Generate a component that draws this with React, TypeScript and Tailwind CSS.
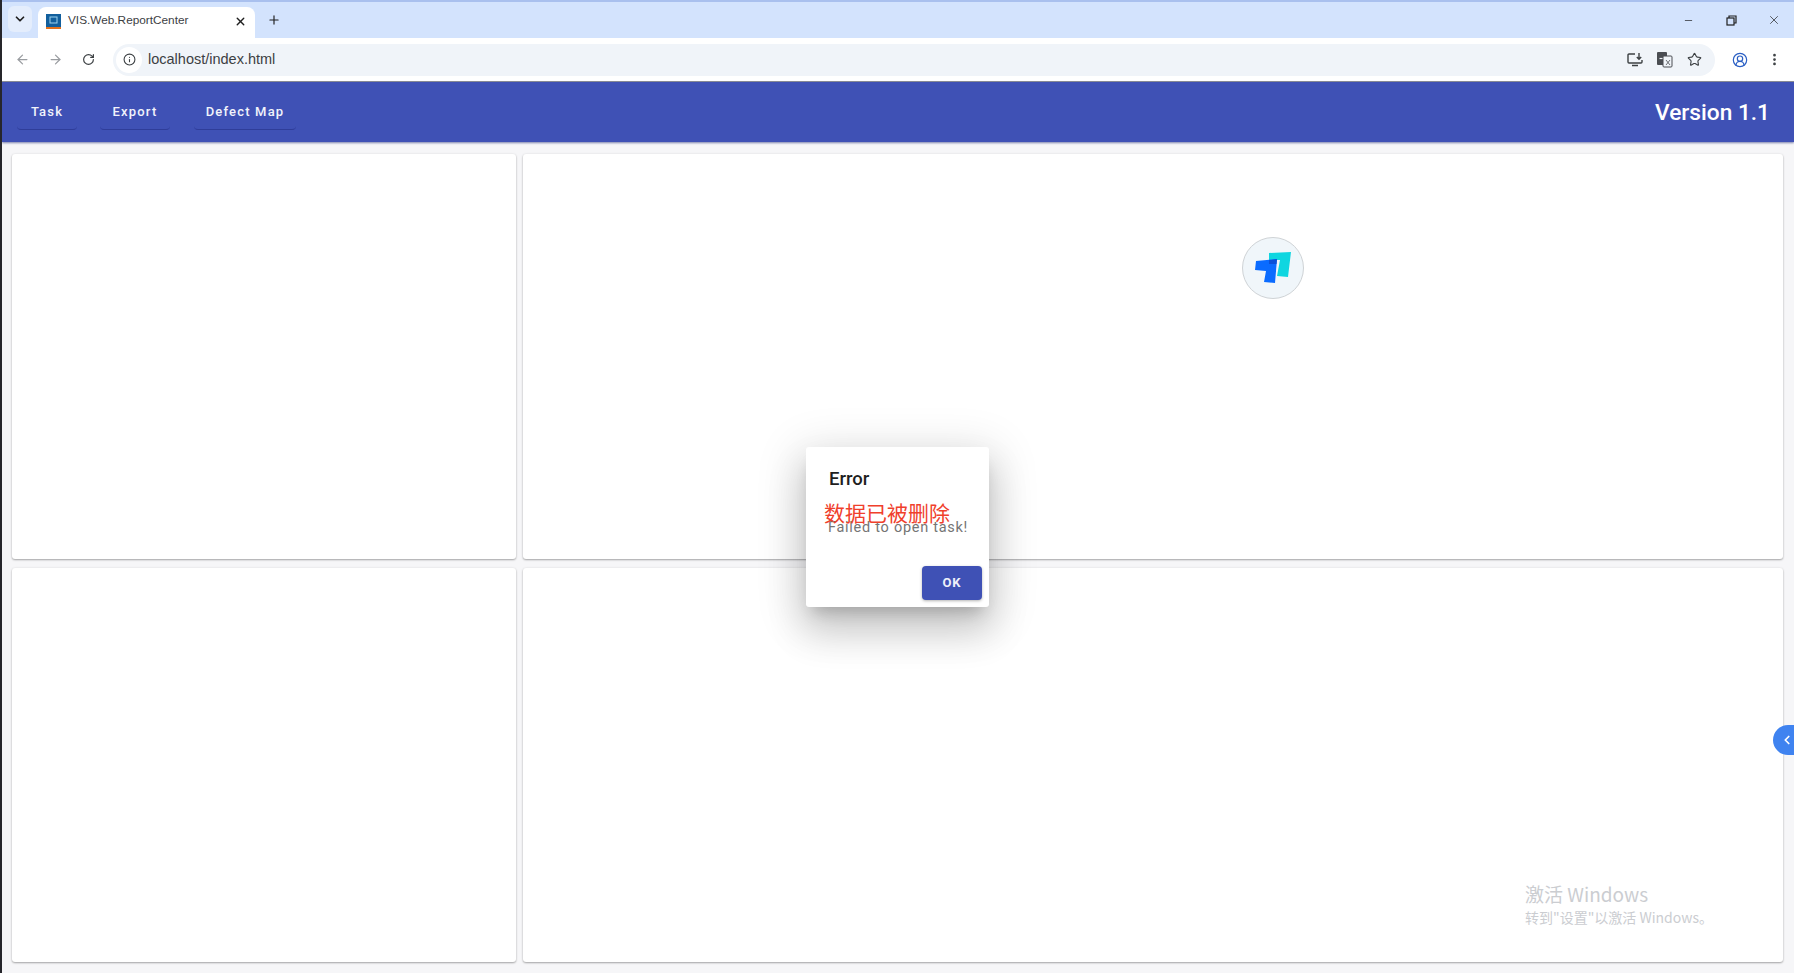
import React from "react"
import { ArrowLeft, ArrowRight, ChevronDown, ChevronLeft, CircleUserRound, EllipsisVertical, Info, Minus, Plus, RotateCw, Star, X } from "lucide-react"

const roboto = "font-['Roboto','Liberation_Sans',sans-serif]"
const cjk = "font-['Noto_Sans_CJK_SC','Noto_Sans',sans-serif]"

const menus = [
    { label: "Task", width: "w-[60px]", margin: "ml-[15px]" },
    { label: "Export", width: "w-[70px]", margin: "ml-[23px]" },
    { label: "Defect Map", width: "w-[102px]", margin: "ml-[24px]" },
]

const TabBar = () => {
    return (
        <div className="h-[38px] flex items-end bg-[#d3e3fd] border-t-2 border-[#a9c0ee]">
            <div className="w-[24px] h-[26px] ml-[6px] mb-[6px] rounded-md bg-[#e4edfc] flex items-center justify-center">
                <ChevronDown size={14} strokeWidth={3} className="text-[#1f1f1f]" />
            </div>
            <div className="w-[217px] h-[31px] ml-[6px] pb-[3px] rounded-t-lg bg-white flex items-center pl-[8px] pr-[8px]">
                <svg width="15" height="15" viewBox="0 0 15 15">
                    <rect width="15" height="13" fill="#125f9d" />
                    <rect y="13" width="15" height="2" fill="#e2711d" />
                    <rect x="4" y="3" width="7" height="6" fill="none" stroke="#9bd3f0" strokeWidth="1" />
                </svg>
                <span className="ml-[7px] text-[11.800px] text-[#3c4043] font-['Liberation_Sans',sans-serif] flex-1">VIS.Web.ReportCenter</span>
                <X size={13} strokeWidth={2.5} className="text-[#1f1f1f]" />
            </div>
            <Plus size={14} strokeWidth={2} className="ml-[12px] mb-[11px] text-[#1f1f1f]" />
            <div className="flex-1" />
            <div className="flex items-center mb-[11px] text-[#1f1f1f]">
                <Minus size={11} strokeWidth={1.5} />
                <svg width="11" height="11" viewBox="0 0 11 11" className="ml-[32px]" fill="none" stroke="#1f1f1f" strokeWidth="1.2">
                    <rect x="1" y="3" width="7" height="7" />
                    <path d="M3 3V1h7v7H8" />
                </svg>
                <X size={14} strokeWidth={1.2} className="ml-[30px] mr-[13px]" />
            </div>
        </div>
    )
}

const AddressBar = () => {
    return (
        <div className="h-[44px] bg-white flex items-center border-b border-[#8d8f96]">
            <ArrowLeft size={15} className="ml-[13px] text-[#9a9da1]" />
            <ArrowRight size={15} className="ml-[18px] text-[#9a9da1]" />
            <RotateCw size={13} strokeWidth={2.2} className="ml-[19px] text-[#3c4043]" />
            <div className="h-[32px] w-[1602px] ml-[18px] rounded-full bg-[#f0f4f9] flex items-center">
                <div className="w-[26px] h-[26px] ml-[3px] rounded-full bg-white flex items-center justify-center">
                    <Info size={13} strokeWidth={2} className="text-[#3c4043]" />
                </div>
                <span className="ml-[6px] text-[14.500px] text-[#3c4043] font-['Liberation_Sans',sans-serif]">localhost/index.html</span>
                <div className="flex-1" />
                <svg width="16" height="15" viewBox="0 0 16 15" fill="none" stroke="#3c4043" strokeWidth="1.4">
                    <path d="M8 2H2a1 1 0 0 0-1 1v7a1 1 0 0 0 1 1h12a1 1 0 0 0 1-1V8" />
                    <path d="M12 1v6M9.800 5l2.200 2.200L14.200 5M5 13.500h6" />
                </svg>
                <svg width="16" height="16" viewBox="0 0 16 16" className="ml-[14px]">
                    <rect x="0" y="0" width="10" height="13" rx="1" fill="#4a4d52" />
                    <rect x="6" y="4" width="9" height="11" rx="1" fill="#f0f4f9" stroke="#4a4d52" />
                    <path d="M2.500 6.500h3" stroke="#f0f4f9" strokeWidth="1.2" />
                    <path d="M9 8l4 5M13 8l-4 5" stroke="#4a4d52" strokeWidth="0.8" />
                </svg>
                <Star size={15} strokeWidth={1.8} className="ml-[14px] mr-[13px] text-[#3c4043]" />
            </div>
            <CircleUserRound size={16} strokeWidth={1.8} className="ml-[17px] text-[#2a5fc4]" />
            <EllipsisVertical size={15} strokeWidth={2.4} className="ml-[19px] text-[#3c4043]" />
        </div>
    )
}

const Header = () => {
    return (
        <div className={`h-[60px] bg-[#3f51b5] flex items-center shadow-[0_1px_2px_rgba(40,50,120,0.6)] ${roboto}`}>
            {menus.map((menu) => {
                return (
                    <div
                        key={menu.label}
                        className={`${menu.width} ${menu.margin} h-[36px] flex items-center justify-center border-b border-[#2f3d99] rounded-b text-[13px] font-medium tracking-[0.09em] text-[#f1f3fb]`}
                    >
                        {menu.label}
                    </div>
                )
            })}
            <div className="flex-1" />
            <div className="mr-[24px] mt-[2px] text-[22.700px] font-medium text-white">Version 1.1</div>
        </div>
    )
}

const Card = () => {
    return <div className="bg-white rounded-[3px] shadow-[0_1px_2px_rgba(0,0,0,0.32),0_0_3px_rgba(0,0,0,0.06)]" />
}

const Dialog = () => {
    return (
        <div className={`absolute left-[804px] top-[447px] w-[183px] h-[160px] bg-white rounded-[3px] shadow-[0_11px_15px_-7px_rgba(0,0,0,0.2),0_24px_38px_3px_rgba(0,0,0,0.14),0_9px_46px_8px_rgba(0,0,0,0.12)] ${roboto}`}>
            <div className="absolute left-[23px] top-[20px] text-[18.500px] leading-[24px] font-medium text-[#1f1f1f]">Error</div>
            <div className="absolute left-[22px] top-[71px] text-[14.500px] leading-[20px] tracking-[0.05em] text-[#757575]">Failed to open task!</div>
            <div className={`absolute left-[18px] top-[50px] text-[21px] leading-[30px] text-[#f0402c] ${cjk}`}>数据已被删除</div>
            <div className="absolute left-[116px] top-[119px] w-[60px] h-[34px] rounded bg-[#3f51b5] shadow-[0_1px_3px_rgba(0,0,0,0.3)] flex items-center justify-center text-[13px] font-bold tracking-[0.06em] text-[#eef0fa]">OK</div>
        </div>
    )
}

export default function App() {
    return (
        <div className="relative w-[1794px] h-[973px] overflow-hidden bg-[#f6f6f8] border-l-2 border-[#26262b]">
            <TabBar />
            <AddressBar />
            <Header />
            <div className="grid grid-cols-[504px_1260px] grid-rows-[405px_394px] gap-x-[7px] gap-y-[9px] pl-[10px] pt-[12px]">
                <Card />
                <Card />
                <Card />
                <Card />
            </div>

            <div className="absolute left-[1240px] top-[237px] w-[62px] h-[62px] rounded-full bg-[#f0f6fa] border border-[#cfd3d6] overflow-hidden">
                <svg width="60" height="60" viewBox="23 18 60 60">
                    <path d="M49 33 L71 32 L68 57 L57 56 L60 40 L49 40Z" fill="#0fd6e0" />
                    <path d="M36 41 L57 39 L55 63 L44 62 L46 51 L35 50Z" fill="#0a6bff" />
                    <path d="M49 40 L57 39 L56.500 44 L49 44Z" fill="#0a50d8" />
                </svg>
            </div>

            <Dialog />

            <div className="absolute left-[-2px] top-[723px] w-[2px] h-[31px] bg-[#1a5fe0]" />

            <div className="absolute left-[1771px] top-[725px] w-[24px] h-[30px] rounded-l-full bg-[#3f83f0] flex items-center justify-end">
                <ChevronLeft size={14} strokeWidth={3} className="text-white mr-[3px]" />
            </div>

            <div className={`absolute left-[1523px] top-[881px] text-[#cbcdd1] ${cjk}`}>
                <div className="text-[19px] leading-[26px]">激活 Windows</div>
                <div className="text-[14px] leading-[20px]">转到"设置"以激活 Windows。</div>
            </div>
        </div>
    )
}
